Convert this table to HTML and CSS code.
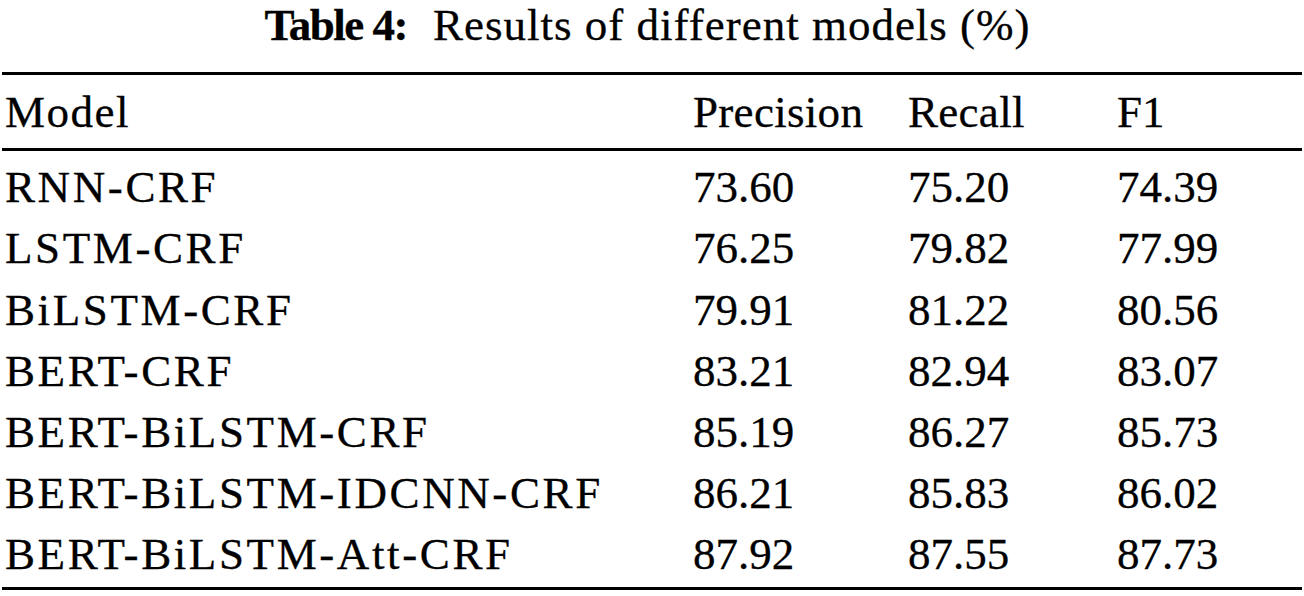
FILE: index.html
```html
<!DOCTYPE html>
<html>
<head>
<meta charset="utf-8">
<link rel="stylesheet" href="styles.css">
</head>
<body>
<div class="page">
  <div class="caption"><b class="cap-label">Table 4:</b><span class="cap-text">Results of different models (%)</span></div>
  <div class="table">
    <div class="row head">
      <div class="cell first head-model">Model</div>
      <div class="cell head-word">Precision</div>
      <div class="cell head-word">Recall</div>
      <div class="cell">F1</div>
    </div>
    <div class="body">
      <div class="row"><div class="cell first">RNN-CRF</div><div class="cell">73.60</div><div class="cell">75.20</div><div class="cell">74.39</div></div>
      <div class="row"><div class="cell first">LSTM-CRF</div><div class="cell">76.25</div><div class="cell">79.82</div><div class="cell">77.99</div></div>
      <div class="row"><div class="cell first">BiLSTM-CRF</div><div class="cell">79.91</div><div class="cell">81.22</div><div class="cell">80.56</div></div>
      <div class="row"><div class="cell first">BERT-CRF</div><div class="cell">83.21</div><div class="cell">82.94</div><div class="cell">83.07</div></div>
      <div class="row"><div class="cell first">BERT-BiLSTM-CRF</div><div class="cell">85.19</div><div class="cell">86.27</div><div class="cell">85.73</div></div>
      <div class="row"><div class="cell first">BERT-BiLSTM-IDCNN-CRF</div><div class="cell">86.21</div><div class="cell">85.83</div><div class="cell">86.02</div></div>
      <div class="row"><div class="cell first">BERT-BiLSTM-Att-CRF</div><div class="cell">87.92</div><div class="cell">87.55</div><div class="cell">87.73</div></div>
    </div>
  </div>
</div>
</body>
</html>
```
FILE: styles.css
```css
html, body {
  margin: 0;
  padding: 0;
  background: #ffffff;
}
body {
  font-family: "Liberation Serif", "Times New Roman", serif;
  color: #000;
  width: 1304px;
  height: 596px;
  overflow: hidden;
}
.page {
  padding: 0 2px;
}
.caption {
  display: flex;
  justify-content: center;
  align-items: baseline;
  gap: 26px;
  font-size: 45px;
  line-height: 50px;
  height: 72px;
  white-space: nowrap;
  padding-right: 9px;
  -webkit-text-stroke: 0.3px #000;
}
.cap-label {
  font-weight: bold;
  font-size: 45px;
  letter-spacing: -1.5px;
}
.cap-text {
  letter-spacing: 1px;
}
.table {
  border-top: 3px solid #000;
  border-bottom: 3px solid #000;
  font-size: 45px;
  -webkit-text-stroke: 0.3px #000;
}
.row {
  display: grid;
  grid-template-columns: 691px 215px 209px 1fr;
  line-height: 61.2px;
  white-space: nowrap;
}
.head {
  padding-top: 7px;
  padding-bottom: 5px;
  border-bottom: 3px solid #000;
}
.body {
  padding-top: 6px;
  padding-bottom: 1px;
}
.cell.first {
  padding-left: 3px;
  letter-spacing: 2.6px;
}
.cell.head-model {
  letter-spacing: 1.5px;
}
.cell.head-word {
  letter-spacing: 0.3px;
}
```
